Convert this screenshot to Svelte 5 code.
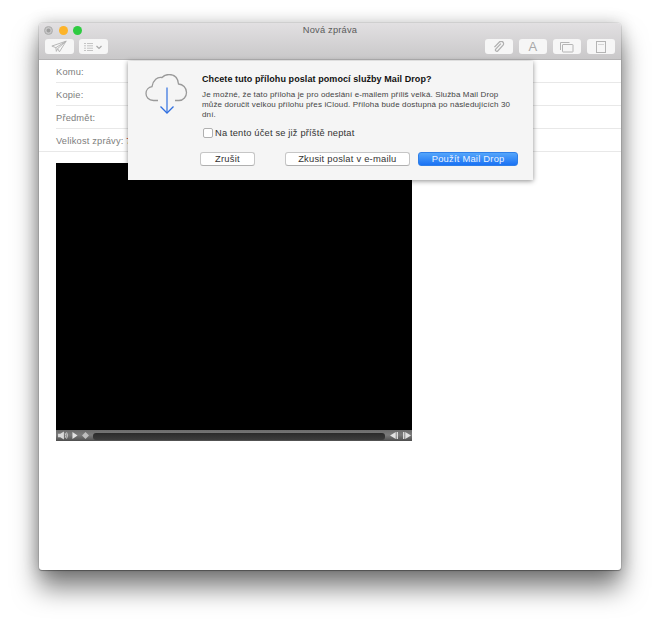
<script>
  const rows = ['Komu:', 'Kopie:', 'Předmět:'];
</script>

<div class="page">
  <div class="window">
    <header class="toolbar">
      <div class="titlebar">
        <div class="lights">
          <span class="light close"></span>
          <span class="light min"></span>
          <span class="light max"></span>
        </div>
        <span class="title">Nová zpráva</span>
      </div>
      <div class="tools">
        <div class="group">
          <button type="button" class="tool" aria-label="Odeslat">
            <svg width="16" height="13" viewBox="0 0 18 14" fill="none" stroke="#b0b0b0" stroke-width="1">
              <path d="M17 1 1 6.500l4.500 1.800L17 1 7.500 9.400 9.500 13 17 1z" stroke-linejoin="round" />
              <path d="M5.500 8.300 6 12.500l1.500-3.100" stroke-linejoin="round" />
            </svg>
          </button>
          <button type="button" class="tool" aria-label="Seznam">
            <svg width="18" height="10" viewBox="0 0 18 10" fill="none" stroke="#c4c4c4">
              <path d="M0 1.500h2M0 3.800h2M0 6.200h2M0 8.500h2" />
              <path d="M3 1.500h6M3 3.800h6M3 6.200h6M3 8.500h6" />
              <path d="m12.500 4 2.500 2.500L17.500 4" stroke="#a8a8a8" stroke-width="1.200" />
            </svg>
          </button>
        </div>
        <div class="group right">
          <button type="button" class="tool" aria-label="Příloha">
            <svg width="12" height="12" viewBox="0 0 14 14" fill="none" stroke="#b0b0b0" stroke-width="1.500">
              <path d="m9.500 2.800-6 6.400a1.600 1.600 0 0 0 2.300 2.200l6-6.500a2.800 2.800 0 0 0-4-4L2 7" transform="translate(-.3 .2)" />
            </svg>
          </button>
          <button type="button" class="tool letter">A</button>
          <button type="button" class="tool" aria-label="Fotky">
            <svg width="15" height="12" viewBox="0 0 15 12" fill="none" stroke="#b4b4b4">
              <path d="M1.500 9V1.500h9" />
              <rect x="3.500" y="3.500" width="10.500" height="7.500" rx=".5" />
            </svg>
          </button>
          <button type="button" class="tool" aria-label="Šablony">
            <svg width="12" height="14" viewBox="0 0 12 14" fill="none" stroke="#b4b4b4">
              <rect x="1.500" y="1.500" width="9" height="11" />
              <path d="M3.500 4.500h1M5.500 4.500h1M7.500 4.500h1" />
            </svg>
          </button>
        </div>
      </div>
    </header>

    <section class="fields">
      {#each rows as row}
        <div class="row">{row}</div>
      {/each}
      <div class="row last">Velikost zprávy: <b>7</b></div>
    </section>

    <div class="video">
      <div class="controller">
        <svg class="ctl" width="10" height="9" viewBox="0 0 11 10" fill="#d8d8d8">
          <path d="M0 3h2.500L6.500.5v9L2.500 7H0z" />
          <path d="M8 2.500q1.500 2.500 0 5M9.500 1.500q2 3.500 0 7" fill="none" stroke="#d8d8d8" />
        </svg>
        <svg class="ctl" width="6" height="7" viewBox="0 0 7 8" fill="#e2e2e2"><path d="M.5 0 6.500 4 .5 8z" /></svg>
        <svg class="ctl thumb" width="7" height="7" viewBox="0 0 7 7" fill="#bdbdbd"><path d="M3.500 0 7 3.500 3.500 7 0 3.500z" /></svg>
        <div class="track"></div>
        <svg class="ctl" width="8" height="7" viewBox="0 0 9 8" fill="#e2e2e2"><path d="M6.500 0v8L0 4zM7.500 0H9v8H7.500z" /></svg>
        <svg class="ctl gap" width="8" height="7" viewBox="0 0 9 8" fill="#e2e2e2"><path d="M2.500 0v8L9 4zM0 0h1.500v8H0z" /></svg>
      </div>
    </div>

    <div class="dialog">
      <svg class="cloud" width="44" height="42" viewBox="0 0 44 42" fill="none">
        <path d="M13 26.500H8.500C3.500 26.500 1 23 1 19.500c0-3.600 2.600-6.300 6-6.800C8 6 12.500 2.500 17 3.500c1.500-1.700 4-3 7-3 5.500 0 9 3.600 9.500 9.500 4.300.3 8 3.700 8 8.500 0 4-3 8-7.500 8H30" stroke="#9a9a9a" stroke-width="1.300" />
        <path d="M22 13.500V39" stroke="#2f6fe0" stroke-width="1.200" />
        <path d="m15.500 32.500 6.500 6.500 6.500-6.500" stroke="#2f6fe0" stroke-width="1.300" />
      </svg>
      <div class="content">
        <h2>Chcete tuto přílohu poslat pomocí služby Mail Drop?</h2>
        <p>Je možné, že tato příloha je pro odeslání e-mailem příliš velká. Služba Mail Drop může doručit velkou přílohu přes iCloud. Příloha bude dostupná po následujících 30 dní.</p>
        <label class="check"><input type="checkbox" /><span>Na tento účet se již příště neptat</span></label>
        <div class="buttons">
          <button type="button" class="btn cancel">Zrušit</button>
          <button type="button" class="btn retry">Zkusit poslat v e-mailu</button>
          <button type="button" class="btn primary">Použít Mail Drop</button>
        </div>
      </div>
    </div>
  </div>
</div>

<style>
  :global(body) {
    margin: 0;
    background: #fff;
    font-family: 'Liberation Sans', Arial, sans-serif;
  }

  .page {
    width: 660px;
    height: 625px;
    padding: 23px 39px 0;
    box-sizing: border-box;
    overflow: hidden;
  }

  .window {
    position: relative;
    width: 582px;
    height: 547px;
    background: #fff;
    border-radius: 4px 4px 3px 3px;
    box-shadow:
      0 0 0 1px rgba(0, 0, 0, 0.06),
      0 1px 1px rgba(0, 0, 0, 0.3),
      0 18px 26px rgba(0, 0, 0, 0.5),
      0 0 16px rgba(0, 0, 0, 0.22);
  }

  .toolbar {
    height: 37px;
    box-sizing: border-box;
    border-radius: 4px 4px 0 0;
    background: linear-gradient(#e2e0e2, #c9c8c9);
    border-bottom: 1px solid #b5b4b5;
  }

  .titlebar {
    position: relative;
    display: flex;
    justify-content: center;
    align-items: center;
    height: 13px;
  }

  .lights {
    position: absolute;
    left: 5px;
    top: 3px;
    display: flex;
    gap: 5.500px;
  }

  .light {
    width: 9px;
    height: 9px;
    border-radius: 50%;
  }

  .close {
    box-sizing: border-box;
    border: 1px solid #adadad;
    background: #c9c8c9;
    box-shadow: inset 0 0 0 1.500px #c9c8c9, inset 0 0 0 4px #9d9d9d;
  }

  .min {
    background: #fdb42a;
  }

  .max {
    background: #2ecb41;
  }

  .title {
    font-size: 9.300px;
    letter-spacing: 0.2px;
    color: #5a5a5a;
  }

  .tools {
    display: flex;
    justify-content: space-between;
    padding: 0 6px;
    margin-top: 3px;
  }

  .group {
    display: flex;
    gap: 5.500px;
  }

  .tool {
    display: flex;
    align-items: center;
    justify-content: center;
    width: 28.500px;
    height: 15px;
    padding: 0;
    border: 0;
    border-radius: 3px;
    background: #f6f6f6;
  }

  .letter {
    font: 13px 'Liberation Sans', Arial, sans-serif;
    color: #a8a8a8;
  }

  .fields {
    height: 92px;
  }

  .row {
    height: 23px;
    box-sizing: border-box;
    margin-left: 17px;
    padding-top: 6px;
    border-bottom: 1px solid #e8e8e8;
    font-size: 9.300px;
    letter-spacing: 0.18px;
    line-height: 13px;
    color: #7d7d7d;
  }

  .row.last {
    margin-left: 0;
    padding-left: 17px;
  }

  .row b {
    font-weight: 400;
    color: #c8342c;
  }

  .video {
    display: flex;
    align-items: flex-end;
    width: 356px;
    height: 278px;
    margin: 11px 0 0 17px;
    background: #000;
  }

  .controller {
    display: flex;
    align-items: center;
    gap: 4px;
    box-sizing: border-box;
    width: 100%;
    height: 11px;
    padding: 0 1px 0 2px;
    background: linear-gradient(#6a6a6a, #7b7b7b 45%, #4e4e4e);
  }

  .ctl {
    flex: none;
  }

  .gap {
    margin-left: 1px;
  }

  .track {
    flex: 1;
    height: 7px;
    margin: 1px 1px 0 0;
    border-radius: 3px;
    background: linear-gradient(#2a2a2a, #3d3d3d);
  }

  .dialog {
    position: absolute;
    left: 89px;
    top: 38px;
    display: flex;
    width: 405px;
    height: 119px;
    box-sizing: border-box;
    padding: 12px 15px 0 16px;
    gap: 13px;
    background: #f5f5f5;
    box-shadow: 0 1px 5px rgba(0, 0, 0, 0.45);
  }

  .cloud {
    flex: none;
    margin: 1px 0 0 1px;
  }

  .content {
    flex: 1;
    min-width: 0;
  }

  h2 {
    margin: 0 0 5px;
    font-size: 9px;
    font-weight: 700;
    letter-spacing: 0.08px;
    line-height: 12px;
    color: #111;
  }

  p {
    width: 314px;
    margin: 0;
    font-size: 8px;
    letter-spacing: 0.14px;
    line-height: 9.900px;
    color: #444;
  }

  .check {
    display: flex;
    align-items: center;
    gap: 2px;
    margin-top: 8px;
    font-size: 9.300px;
    letter-spacing: 0.18px;
    line-height: 11px;
    color: #333;
  }

  .check input {
    appearance: none;
    width: 10px;
    height: 10px;
    margin: 0 0 0 1px;
    border: 1px solid #b0b0b0;
    border-radius: 2px;
    background: #fff;
  }

  .buttons {
    display: flex;
    margin: 13px 0 0 -2px;
  }

  .btn {
    height: 14px;
    padding: 0;
    border: 1px solid #c6c6c6;
    border-bottom-color: #b0b0b0;
    border-radius: 3px;
    background: #fff;
    font: 9.400px/12px 'Liberation Sans', Arial, sans-serif;
    letter-spacing: 0.22px;
    color: #333;
  }

  .cancel {
    width: 55px;
  }

  .retry {
    width: 125px;
    margin-left: 30px;
  }

  .primary {
    width: 100px;
    margin-left: 8.500px;
    border-color: #2f7fe8;
    background: linear-gradient(#55a6fb, #1a72f4);
    color: #e9f2ff;
  }
</style>
